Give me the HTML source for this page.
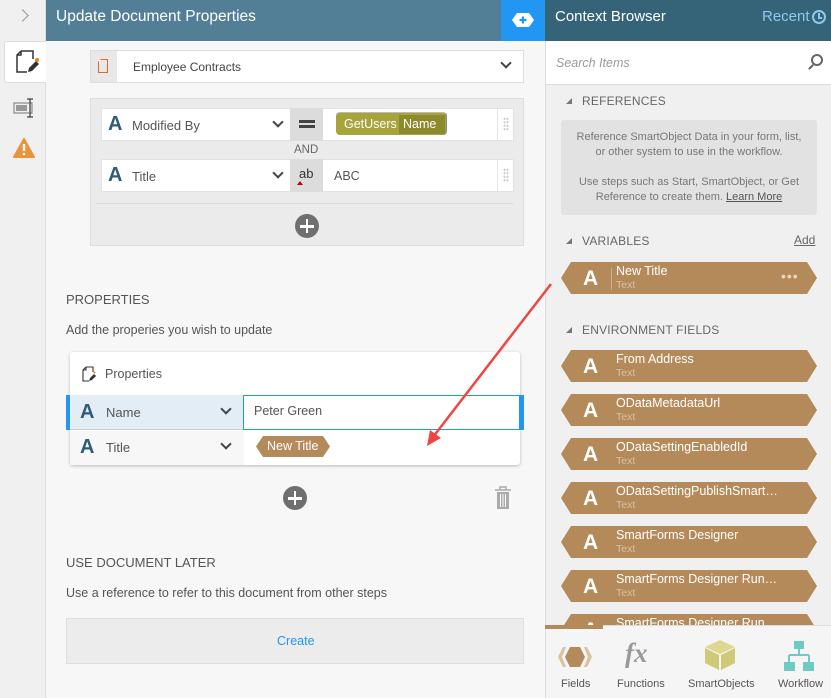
<!DOCTYPE html>
<html><head><meta charset="utf-8"><style>
*{box-sizing:border-box;margin:0;padding:0}
body{width:831px;height:698px;overflow:hidden;font-family:"Liberation Sans",sans-serif;background:#f7f7f7;position:relative;font-size:13px;color:#555}
.abs{position:absolute}
.A{font-weight:bold;color:#2e5c7a;font-size:20px}
.chev{width:8px;height:8px;border-right:2px solid #444;border-bottom:2px solid #444;transform:rotate(45deg)}
.item{position:absolute;left:561px;width:256px;height:32px;background:#b58a5a;clip-path:polygon(10px 0,246px 0,256px 50%,246px 100%,10px 100%,0 50%)}
.item .a{position:absolute;left:22px;top:5px;color:#fff;font-weight:bold;font-size:21px}
.item .s{position:absolute;left:50px;top:6px;width:1px;height:22px;background:#d0b08c}
.item .n{position:absolute;left:55px;top:2px;color:#fff;font-size:12.5px}
.item .t{position:absolute;left:55px;top:17px;color:#d9c2a6;font-size:10.5px}
.hd{position:absolute;left:566px;font-size:12px;color:#666;letter-spacing:.2px}
.hd:before{content:"";display:inline-block;border-left:6px solid transparent;border-bottom:6px solid #777;margin-right:10px;vertical-align:1px}
</style></head><body>
<div class="abs" style="left:0;top:0;width:46px;height:698px;background:#f0f0f0;border-right:1px solid #ddd"></div>
<div class="abs" style="left:18px;top:11px;width:9px;height:9px;border-right:1.5px solid #999;border-top:1.5px solid #999;transform:rotate(45deg)"></div>
<div class="abs" style="left:4px;top:41px;width:42px;height:42px;background:#fff;border:1px solid #ddd;border-right:none;border-radius:3px 0 0 3px"></div>
<svg class="abs" style="left:15px;top:50px" width="24" height="24" viewBox="0 0 24 24"><path d="M6 1h12v8M6 1L2 5v17h10M2 5h4V1" fill="none" stroke="#333" stroke-width="1.5"/><path d="M13 22l1-4 7-7 3 3-7 7z" fill="#333"/><circle cx="22" cy="10" r="2" fill="#e67e22"/></svg>
<svg class="abs" style="left:13px;top:98px" width="24" height="20" viewBox="0 0 24 20"><rect x="1" y="5" width="18" height="10" fill="none" stroke="#888" stroke-width="1.2"/><rect x="3" y="7" width="11" height="6" fill="#999"/><path d="M17 1v18M14 1h6M14 19h6" stroke="#444" stroke-width="1.3"/></svg>
<svg class="abs" style="left:13px;top:138px" width="22" height="20" viewBox="0 0 22 20"><path d="M11 1L21 19H1z" fill="#e8943a" stroke="#e8943a" stroke-linejoin="round" stroke-width="2"/><path d="M11 6v7" stroke="#fff" stroke-width="2.4"/><circle cx="11" cy="16" r="1.3" fill="#fff"/></svg>
<div class="abs" style="left:46px;top:0;width:455px;height:41px;background:#527f96"></div>
<div class="abs" style="left:56px;top:8px;color:#fff;font-size:15.5px">Update Document Properties</div>
<div class="abs" style="left:501px;top:0;width:44px;height:41px;background:#2196f3"></div>
<svg class="abs" style="left:512px;top:13px" width="22" height="14" viewBox="0 0 22 14"><path d="M5 0h12l5 7-5 7H5L0 7z" fill="#fff"/><path d="M11 3.5v7M7.5 7h7" stroke="#2196f3" stroke-width="2.2"/></svg>
<div class="abs" style="left:90px;top:50px;width:434px;height:33px;background:#fff;border:1px solid #ddd"></div>
<div class="abs" style="left:91px;top:51px;width:26px;height:31px;background:#e8e8e8"></div>
<div class="abs" style="left:98px;top:59px;width:10px;height:14px;border:1.3px solid #e06a1a;clip-path:polygon(3px 0,100% 0,100% 100%,0 100%,0 3px)"></div>
<div class="abs" style="left:133px;top:60px;font-size:12px;color:#444">Employee Contracts</div>
<div class="chev abs" style="left:502px;top:59px"></div>
<div class="abs" style="left:90px;top:98px;width:434px;height:148px;background:#ebebeb;border:1px solid #ddd"></div>
<div class="abs" style="left:101px;top:108px;width:413px;height:33px;background:#fff;border:1px solid #e2e2e2"></div>
<div class="abs" style="left:101px;top:159px;width:413px;height:33px;background:#fff;border:1px solid #e2e2e2"></div>
<div class="abs" style="left:290px;top:108px;width:33px;height:84px;background:#dcdcdc"></div>
<div class="abs" style="left:290px;top:141px;width:33px;height:18px;background:#ebebeb"></div>
<div class="abs A" style="left:108px;top:113px">A</div><div class="abs" style="left:132px;top:118px;font-size:13px">Modified By</div><div class="chev abs" style="left:274px;top:118px"></div>
<div class="abs A" style="left:108px;top:164px">A</div><div class="abs" style="left:132px;top:169px;font-size:13px">Title</div><div class="chev abs" style="left:274px;top:169px"></div>
<div class="abs" style="left:299px;top:120px;width:16px;height:2.5px;background:#444;box-shadow:0 5px 0 #444"></div>
<div class="abs" style="left:294px;top:144px;font-size:11.5px;color:#666">AND</div>
<div class="abs" style="left:299px;top:166px;font-size:13px;color:#333">ab</div>
<div class="abs" style="left:297px;top:181px;border-left:3px solid transparent;border-right:3px solid transparent;border-bottom:4px solid #c00"></div>
<div class="abs" style="left:336px;top:112px;width:111px;height:23px;border-radius:4px;background:#a6a43a;border-top:1px solid #bbb;border-right:1px solid #888"></div>
<div class="abs" style="left:399px;top:115px;width:46px;height:19px;background:#8c8a2c"></div>
<div class="abs" style="left:344px;top:117px;color:#fff;font-size:12.5px">GetUsers</div>
<div class="abs" style="left:403px;top:117px;color:#fff;font-size:12.5px">Name</div>
<div class="abs" style="left:334px;top:169px;font-size:12.5px;color:#555">ABC</div>
<div class="abs" style="left:497px;top:109px;width:1px;height:31px;background:#e6e6e6"></div>
<div class="abs" style="left:497px;top:160px;width:1px;height:31px;background:#e6e6e6"></div>
<div class="abs" style="left:503px;top:117px;width:6px;height:14px;background:radial-gradient(circle,#ccc 1px,transparent 1.2px) 0 0/3px 3.5px"></div>
<div class="abs" style="left:503px;top:168px;width:6px;height:14px;background:radial-gradient(circle,#ccc 1px,transparent 1.2px) 0 0/3px 3.5px"></div>
<div class="abs" style="left:96px;top:203px;width:418px;height:1px;background:#ddd"></div>
<div class="abs" style="left:295px;top:214px;width:24px;height:24px;border-radius:50%;background:#6f6f6f"></div>
<div class="abs" style="left:300px;top:225px;width:14px;height:2.5px;background:#fff"></div><div class="abs" style="left:305.8px;top:219px;width:2.5px;height:14px;background:#fff"></div>
<div class="abs" style="left:66px;top:292px;font-size:13px;color:#555">PROPERTIES</div>
<div class="abs" style="left:66px;top:323px;font-size:12.5px;color:#555">Add the properies you wish to update</div>
<div class="abs" style="left:70px;top:352px;width:450px;height:113px;background:#fff;border-radius:3px;box-shadow:0 1px 3px rgba(0,0,0,.25)"></div>
<svg class="abs" style="left:82px;top:366px" width="14" height="16" viewBox="0 0 14 16"><path d="M4 1h7v5M4 1L1 4v11h6M1 4h3V1" fill="none" stroke="#333" stroke-width="1.1"/><path d="M7 15l1-3 4-4 2 2-4 4z" fill="#333"/><circle cx="12.5" cy="6.5" r="1" fill="#e67e22"/></svg>
<div class="abs" style="left:105px;top:367px;font-size:12.5px;color:#555">Properties</div>
<div class="abs" style="left:66px;top:395px;width:5px;height:35px;background:#2196f3"></div>
<div class="abs" style="left:519px;top:395px;width:5px;height:35px;background:#2196f3"></div>
<div class="abs" style="left:70px;top:395px;width:174px;height:35px;background:#e2edf6;border-bottom:1px solid #ccc"></div>
<div class="abs" style="left:243px;top:395px;width:277px;height:35px;background:#fff;border:1px solid #2196f3"></div>
<div class="abs A" style="left:80px;top:401px">A</div><div class="abs" style="left:106px;top:405px;font-size:13px">Name</div><div class="chev abs" style="left:222px;top:405px"></div>
<div class="abs" style="left:254px;top:404px;font-size:12.5px;color:#555">Peter Green</div>
<div class="abs" style="left:70px;top:431px;width:174px;height:34px;background:#f7f7f7"></div>
<div class="abs A" style="left:80px;top:436px">A</div><div class="abs" style="left:106px;top:440px;font-size:13px">Title</div><div class="chev abs" style="left:222px;top:440px"></div>
<div class="abs" style="left:256px;top:436px;width:74px;height:21px;background:#b58a5a;clip-path:polygon(7px 0,67px 0,74px 50%,67px 100%,7px 100%,0 50%)"></div>
<div class="abs" style="left:267px;top:439px;color:#fff;font-size:12.5px">New Title</div>
<div class="abs" style="left:283px;top:486px;width:24px;height:24px;border-radius:50%;background:#6f6f6f"></div>
<div class="abs" style="left:288px;top:497px;width:14px;height:2.5px;background:#fff"></div><div class="abs" style="left:293.8px;top:491px;width:2.5px;height:14px;background:#fff"></div>
<svg class="abs" style="left:494px;top:486px" width="18" height="24" viewBox="0 0 18 24"><path d="M1 4h16M6 4V1h6v3" fill="none" stroke="#aaa" stroke-width="1.5"/><path d="M3 6h12v17H3z" fill="#aaa"/><path d="M6.5 8v13M9 8v13M11.5 8v13" stroke="#fff" stroke-width="1"/></svg>
<div class="abs" style="left:66px;top:555px;font-size:13px;color:#555">USE DOCUMENT LATER</div>
<div class="abs" style="left:66px;top:586px;font-size:12.5px;color:#555">Use a reference to refer to this document from other steps</div>
<div class="abs" style="left:66px;top:618px;width:458px;height:46px;background:#ececec;border:1px solid #ddd"></div>
<div class="abs" style="left:277px;top:634px;font-size:12.5px;color:#2196f3">Create</div>
<div class="abs" style="left:545px;top:0;width:286px;height:698px;background:#f0f0f0;border-left:1px solid #ddd"></div>
<div class="abs" style="left:545px;top:0;width:286px;height:41px;background:#356479"></div>
<div class="abs" style="left:555px;top:8px;color:#fff;font-size:15px">Context Browser</div>
<div class="abs" style="left:762px;top:8px;color:#8ec8ee;font-size:15px">Recent</div>
<div class="abs" style="left:812px;top:10px;width:14px;height:14px;border-radius:50%;border:2px solid #8ec8ee"></div>
<div class="abs" style="left:818px;top:13px;width:2px;height:5px;background:#8ec8ee"></div><div class="abs" style="left:818px;top:17px;width:4px;height:2px;background:#8ec8ee"></div>
<div class="abs" style="left:546px;top:41px;width:285px;height:44px;background:#fff;border-bottom:1px solid #ddd"></div>
<div class="abs" style="left:556px;top:56px;font-style:italic;color:#999;font-size:12.5px">Search Items</div>
<div class="abs" style="left:811px;top:54px;width:12px;height:12px;border-radius:50%;border:2px solid #666"></div>
<div class="abs" style="left:808px;top:66px;width:6px;height:2px;background:#666;transform:rotate(-45deg)"></div>
<div class="hd" style="top:94px">REFERENCES</div>
<div class="abs" style="left:561px;top:120px;width:256px;height:95px;background:#e2e2e2;border-radius:3px;text-align:center;font-size:11px;color:#777;line-height:15px;padding-top:10px">Reference SmartObject Data in your form, list,<br>or other system to use in the workflow.<br><br>Use steps such as Start, SmartObject, or Get<br>Reference to create them. <u style="color:#555">Learn More</u></div>
<div class="hd" style="top:234px">VARIABLES</div>
<div class="abs" style="left:794px;top:233px;font-size:12px;color:#666;text-decoration:underline">Add</div>
<div class="item" style="top:262px"><div class="a">A</div><div class="s"></div><div class="n">New Title</div><div class="t">Text</div><div style="position:absolute;left:220px;top:6px;color:#e8d8c4;font-size:14px;letter-spacing:1px">•••</div></div>
<div class="hd" style="top:323px">ENVIRONMENT FIELDS</div>
<div class="item" style="top:350px"><div class="a">A</div><div class="n">From Address</div><div class="t">Text</div></div>
<div class="item" style="top:394px"><div class="a">A</div><div class="n">ODataMetadataUrl</div><div class="t">Text</div></div>
<div class="item" style="top:438px"><div class="a">A</div><div class="n">ODataSettingEnabledId</div><div class="t">Text</div></div>
<div class="item" style="top:482px"><div class="a">A</div><div class="n">ODataSettingPublishSmart…</div><div class="t">Text</div></div>
<div class="item" style="top:526px"><div class="a">A</div><div class="n">SmartForms Designer</div><div class="t">Text</div></div>
<div class="item" style="top:570px"><div class="a">A</div><div class="n">SmartForms Designer Run…</div><div class="t">Text</div></div>
<div class="item" style="top:614px"><div class="a">A</div><div class="n">SmartForms Designer Run…</div><div class="t">Text</div></div>
<div class="abs" style="left:545px;top:625px;width:286px;height:73px;background:#f5f5f5;border-top:1px solid #ddd;border-left:1px solid #ddd"></div>
<div class="abs" style="left:545px;top:625px;width:58px;height:4px;background:#b58a5a"></div>
<svg class="abs" style="left:557px;top:646px" width="36" height="22" viewBox="0 0 36 22"><path d="M6 1L1 11l5 10h3L5 11 9 1z" fill="#dcc19f"/><path d="M30 1l5 10-5 10h-3l4-10-4-10z" fill="#dcc19f"/><path d="M13 1h10l5 10-5 10H13L8 11z" fill="#b58a5a"/></svg>
<div class="abs" style="left:625px;top:638px;font-family:'Liberation Serif',serif;font-style:italic;font-weight:bold;font-size:27px;color:#999">fx</div>
<svg class="abs" style="left:704px;top:639px" width="32" height="32" viewBox="0 0 32 32"><path d="M16 1L31 8 16 15 1 8z" fill="#ddd88f"/><path d="M1 9l14 7v15L1 24z" fill="#cfc97a"/><path d="M31 9l-14 7v15l14-7z" fill="#cfc97a"/></svg>
<svg class="abs" style="left:784px;top:640px" width="30" height="32" viewBox="0 0 30 32"><rect x="10" y="1" width="10" height="8" fill="#6ecbc4"/><path d="M15 9v6M5 15h20M5 15v7M25 15v7" stroke="#6ecbc4" stroke-width="2" fill="none"/><rect x="0" y="22" width="11" height="9" fill="#6ecbc4"/><rect x="19" y="22" width="11" height="9" fill="#6ecbc4"/></svg>
<div class="abs" style="left:561px;top:678px;font-size:11px;color:#555">Fields</div>
<div class="abs" style="left:617px;top:678px;font-size:11px;color:#555">Functions</div>
<div class="abs" style="left:688px;top:678px;font-size:11px;color:#555">SmartObjects</div>
<div class="abs" style="left:778px;top:678px;font-size:11px;color:#555">Workflow</div>
<svg class="abs" style="left:0;top:0" width="831" height="698"><line x1="551" y1="284" x2="433" y2="437" stroke="#f04545" stroke-width="2.5"/><path d="M427 446l3-16 11 8z" fill="#f04545"/></svg>
</body></html>
